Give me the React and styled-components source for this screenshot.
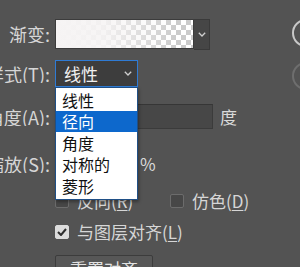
import React from 'react';
import styled, { createGlobalStyle } from 'styled-components';

const GlobalStyle = createGlobalStyle`
  html, body { margin: 0; padding: 0; background: #535353; overflow: hidden; }
  body { font-family: "Noto Sans CJK SC", "Noto Sans", sans-serif; }
  u { text-decoration-thickness: 1px; text-underline-offset: 2px; }
`;

const Page = styled.div`
  position: relative;
  width: 300px;
  height: 267px;
  overflow: hidden;
  display: flex;
  align-items: flex-start;
  background: #535353;
  color: #d8d8d8;
`;

const Form = styled.div`
  flex: 1;
  display: flex;
  flex-direction: column;
  padding-top: 19px;
`;

const Row = styled.div`
  flex: none;
  display: grid;
  grid-template-columns: 50px 1fr;
  column-gap: 5px;
  align-items: center;
  height: ${(p) => p.$h}px;
  margin-top: ${(p) => p.$mt || 0}px;
`;

const Label = styled.div`
  display: flex;
  justify-content: flex-end;
  overflow: hidden;
  white-space: nowrap;
  font-size: 18px;
  line-height: 1;
  color: #d6d6d6;
`;

const Controls = styled.div`
  display: flex;
  align-items: center;
  gap: ${(p) => p.$gap || 0}px;
  height: 100%;
`;

const Swatch = styled.div`
  width: 139px;
  height: 100%;
  box-sizing: border-box;
  border: 1px solid #3c3c3c;
  background:
    linear-gradient(to right, rgba(246,244,244,1) 0%, rgba(246,244,244,0.9) 35%, rgba(246,244,244,0) 88%),
    repeating-conic-gradient(#ffffff 0% 25%, #cbcbcb 0% 50%) 0 0 / 10px 10px;
`;

const SwatchButton = styled.div`
  width: 16px;
  height: calc(100% + 1px);
  box-sizing: border-box;
  background: #464646;
  border: 1px solid #3a3a3a;
  border-left: none;
  display: flex;
  align-items: center;
  justify-content: center;
`;

const SelectWrap = styled.div`
  position: relative;
  width: 83px;
  height: 100%;
`;

const Select = styled.div`
  box-sizing: border-box;
  height: 100%;
  width: 100%;
  background: #3d3d3d;
  border: 1px solid #2f7bd4;
  display: flex;
  align-items: center;
  justify-content: space-between;
  padding: 0 5px 0 8px;
  color: #f0f0f0;
  font-size: 17px;
`;

const Menu = styled.ul`
  position: absolute;
  top: 100%;
  left: 0;
  width: 100%;
  box-sizing: border-box;
  margin: 0;
  padding: 1px 0 2px;
  list-style: none;
  background: #ffffff;
  border: 1px solid #1f4f86;
  box-shadow: 1px 2px 3px rgba(0,0,0,0.35);
  z-index: 5;
`;

const MenuItem = styled.li`
  height: 21.5px;
  display: flex;
  align-items: center;
  padding-left: 6px;
  font-size: 16px;
  color: ${(p) => (p.$active ? '#ffffff' : '#111111')};
  background: ${(p) => (p.$active ? '#0d68cc' : 'transparent')};
`;

const Input = styled.div`
  box-sizing: border-box;
  width: ${(p) => p.$w}px;
  height: 100%;
  background: #474747;
  border: 1px solid #3b3b3b;
  border-top-color: #363636;
`;

const Unit = styled.span`
  font-size: 17px;
  color: #dadada;
`;

const CheckGroup = styled.label`
  display: flex;
  align-items: center;
  gap: 8px;
  width: ${(p) => (p.$w ? `${p.$w}px` : 'auto')};
  font-size: 17px;
  color: #d6d6d6;
  white-space: nowrap;
`;

const Box = styled.span`
  width: 14px;
  height: 14px;
  box-sizing: border-box;
  border-radius: 2px;
  flex: none;
  display: flex;
  align-items: center;
  justify-content: center;
  background: ${(p) => (p.$checked ? '#dcdcdc' : '#474747')};
  border: 1px solid ${(p) => (p.$checked ? '#dcdcdc' : '#6c6c6c')};
`;

const Button = styled.div`
  box-sizing: border-box;
  width: 98px;
  height: 26px;
  background: #575757;
  border: 1px solid #3c3c3c;
  border-radius: 2px;
  display: flex;
  align-items: center;
  justify-content: center;
  font-size: 17px;
  color: #e2e2e2;
`;

const Rail = styled.div`
  width: 8px;
  flex: none;
  overflow: hidden;
  display: flex;
  flex-direction: column;
  padding-top: 19px;
  gap: 15px;
`;

const Ring = styled.div`
  width: 28px;
  height: 28px;
  flex: none;
  box-sizing: border-box;
  border-radius: 50%;
  border: 2px solid ${(p) => p.$c};
`;

const Chevron = ({ color = '#cfcfcf' }) => (
  <svg width="8" height="5" viewBox="0 0 8 5">
    <polyline points="0.8,0.8 4,4 7.2,0.8" fill="none" stroke={color} strokeWidth="1.3" />
  </svg>
);

const Check = () => (
  <svg width="10" height="8" viewBox="0 0 10 8">
    <polyline points="1,4 4,7 9,1" fill="none" stroke="#2e2e2e" strokeWidth="2" />
  </svg>
);

export default function App() {
  const items = ['线性', '径向', '角度', '对称的', '菱形'];
  return (
    <Page>
      <GlobalStyle />
      <Form>
        <Row $h={30}>
          <Label>渐变:</Label>
          <Controls>
            <Swatch />
            <SwatchButton>
              <Chevron />
            </SwatchButton>
          </Controls>
        </Row>
        <Row $h={26} $mt={11}>
          <Label>样式(<u>T</u>):</Label>
          <Controls>
            <SelectWrap>
              <Select>
                <span>线性</span>
                <Chevron />
              </Select>
              <Menu>
                {items.map((t, i) => (
                  <MenuItem key={t} $active={i === 1}>{t}</MenuItem>
                ))}
              </Menu>
            </SelectWrap>
          </Controls>
        </Row>
        <Row $h={25} $mt={18}>
          <Label>角度(<u>A</u>):</Label>
          <Controls $gap={7}>
            <Input $w={158} />
            <Unit>度</Unit>
          </Controls>
        </Row>
        <Row $h={25} $mt={22}>
          <Label>缩放(<u>S</u>):</Label>
          <Controls $gap={4}>
            <Input $w={81} />
            <Unit>%</Unit>
          </Controls>
        </Row>
        <Row $h={24} $mt={12}>
          <span />
          <Controls>
            <CheckGroup $w={115}>
              <Box />
              <span>反向(<u>R</u>)</span>
            </CheckGroup>
            <CheckGroup>
              <Box />
              <span>仿色(<u>D</u>)</span>
            </CheckGroup>
          </Controls>
        </Row>
        <Row $h={24} $mt={7}>
          <span />
          <Controls>
            <CheckGroup>
              <Box $checked>
                <Check />
              </Box>
              <span>与图层对齐(<u>L</u>)</span>
            </CheckGroup>
          </Controls>
        </Row>
        <Row $h={26} $mt={12}>
          <span />
          <Controls>
            <Button>重置对齐</Button>
          </Controls>
        </Row>
      </Form>
      <Rail>
        <Ring $c="#c9c9c9" />
        <Ring $c="#6e6e6e" />
      </Rail>
    </Page>
  );
}
